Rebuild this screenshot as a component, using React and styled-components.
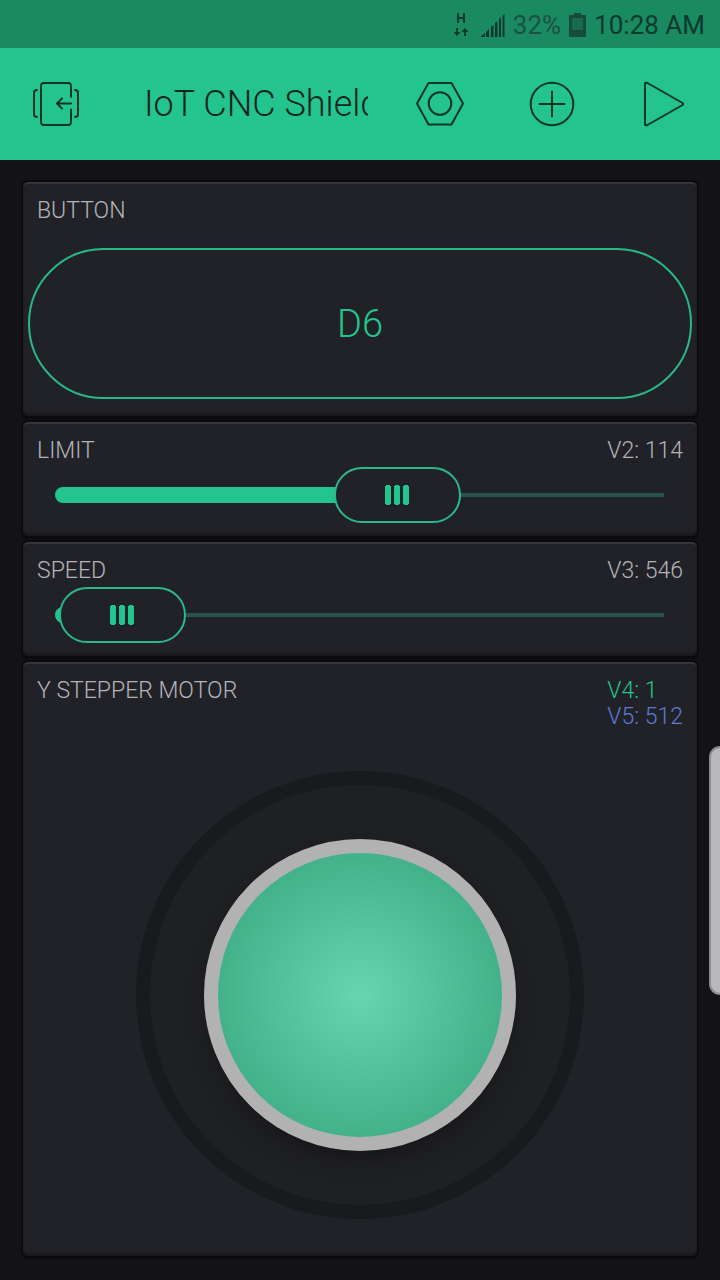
import React, { useState } from "react";
import styled, { createGlobalStyle, css } from "styled-components";

const GlobalStyle = createGlobalStyle`
  *, *::before, *::after { box-sizing: border-box; }
  body {
    margin: 0;
    background: #131217;
    font-family: Roboto, "Liberation Sans", sans-serif;
    font-weight: 300;
  }
  button, input { font: inherit; }
`;

const Screen = styled.div`
  display: flex;
  flex-direction: column;
  min-height: 100vh;
`;

const StatusBar = styled.div`
  display: flex;
  align-items: center;
  justify-content: flex-end;
  gap: 8px;
  height: 48px;
  padding: 2px 15px 0 0;
  background: #1a8a62;
  color: #0d3b2b;
  font-size: 26px;
  font-weight: 400;
  line-height: 48px;
  white-space: nowrap;
`;

const StatusIcon = styled.svg`
  flex: none;
`;

const NetworkIcon = styled(StatusIcon)`
  margin-right: 4px;
`;

const BatteryLevel = styled.span`
  color: #1c5140;
`;

const AppBar = styled.header`
  display: flex;
  align-items: stretch;
  height: 112px;
  background: #24c48e;
  color: #0f3527;
`;

const IconButton = styled.button`
  display: flex;
  flex: none;
  align-items: center;
  justify-content: center;
  width: 112px;
  padding: 0;
  border: 0;
  background: none;
  color: inherit;

  svg {
    fill: none;
    stroke: currentColor;
    stroke-width: 2;
    stroke-linecap: round;
    stroke-linejoin: round;
  }
`;

const Title = styled.h1`
  flex: 1;
  min-width: 0;
  margin: 0 16px 0 32px;
  overflow: hidden;
  color: #14251f;
  font-size: 36px;
  font-weight: 300;
  line-height: 112px;
  white-space: nowrap;
`;

const Board = styled.main`
  display: flex;
  flex: 1;
  flex-direction: column;
  gap: 6px;
  padding: 22px 23px 24px;
`;

const Widget = styled.section`
  display: flex;
  flex: ${(p) => (p.$fill ? "1 0 auto" : "none")};
  flex-direction: column;
  border-top: 2px solid #35353a;
  border-radius: 5px;
  background: #212227;
  box-shadow: 0 0 0 2px #0b0b0e, 0 3px 2px #0b0b0e, inset 0 -3px 2px #1a1a1e;
`;

const WidgetHeader = styled.div`
  display: flex;
  align-items: flex-start;
  justify-content: space-between;
  padding: 14px 14px 0;
  color: #b4b4b8;
  font-size: 23px;
  line-height: 26px;
`;

const WidgetName = styled.label``;

const Readings = styled.div`
  display: flex;
  flex-direction: column;
`;

const tones = { plain: "#b4b4b8", green: "#24c48e", blue: "#5c7bd6" };

const Reading = styled.output`
  color: ${(p) => tones[p.$tone]};
`;

const PinButton = styled.button`
  height: 151px;
  margin: 24px 5px 17px;
  border: 2px solid #27b887;
  border-radius: 76px;
  background: none;
  color: #24c48e;
  font-size: 38px;
  font-weight: 300;
`;

const SliderRow = styled.div`
  display: grid;
  align-items: center;
  margin: 3px 33px 13px 32px;
  height: 56px;

  > * { grid-area: 1 / 1; }
`;

const Rail = styled.span`
  height: 4px;
  background: #27534a;
`;

const RailFill = styled.span`
  height: 16px;
  border-radius: 8px;
  background: #24c48e;
`;

const bar = "linear-gradient(#24c48e, #24c48e)";

const thumb = css`
  box-sizing: border-box;
  width: 127px;
  height: 56px;
  border: 2px solid #2bb88a;
  border-radius: 28px;
  background:
    ${bar} 49px 17px / 6px 18px no-repeat,
    ${bar} 58px 17px / 6px 18px no-repeat,
    ${bar} 67px 17px / 6px 18px no-repeat,
    ${bar} 50px 16px / 4px 20px no-repeat,
    ${bar} 59px 16px / 4px 20px no-repeat,
    ${bar} 68px 16px / 4px 20px no-repeat,
    #212227;
`;

const Range = styled.input`
  appearance: none;
  width: 100%;
  height: 56px;
  margin: 0;
  background: none;

  &::-webkit-slider-thumb {
    appearance: none;
    ${thumb}
  }
  &::-moz-range-thumb {
    ${thumb}
  }
`;

const PadArea = styled.div`
  display: flex;
  flex: 1;
  align-items: center;
  justify-content: center;
  padding: 16px 14px 12px;
`;

const Pad = styled.div`
  display: flex;
  align-items: center;
  justify-content: center;
  width: 448px;
  max-width: 100%;
  aspect-ratio: 1;
  border: 14px solid #191a1d;
  border-radius: 50%;
  background: #1f2023;
`;

const Knob = styled.button`
  width: 312px;
  max-width: 75%;
  aspect-ratio: 1;
  padding: 0;
  border: 14px solid #b2b2b2;
  border-radius: 50%;
  background: #43b28b radial-gradient(circle closest-side, #66d6b0, #43b28b);
  box-shadow: 0 14px 20px -4px #17181b;
`;

const EdgeHandle = styled.div`
  position: fixed;
  top: 746px;
  right: 0;
  width: 11px;
  height: 249px;
  border: 2px solid #8c8c90;
  border-right: 0;
  border-radius: 11px 0 0 11px;
  background: #b9b9bc;
`;

function SliderWidget({ id, name, pin, min, max, initial }) {
  const [value, setValue] = useState(initial);
  const share = ((value - min) / (max - min)) * 100;
  return (
    <Widget>
      <WidgetHeader>
        <WidgetName htmlFor={id}>{name}</WidgetName>
        <Readings>
          <Reading $tone="plain" htmlFor={id}>{pin}: {value}</Reading>
        </Readings>
      </WidgetHeader>
      <SliderRow>
        <Rail />
        <RailFill style={{ width: `max(16px, ${share}%)` }} />
        <Range
          id={id}
          type="range"
          min={min}
          max={max}
          value={value}
          onChange={(e) => setValue(Number(e.target.value))}
        />
      </SliderRow>
    </Widget>
  );
}

export default function App() {
  return (
    <Screen>
      <GlobalStyle />
      <StatusBar>
        <NetworkIcon width="14" height="24" viewBox="0 0 14 24" aria-hidden="true">
          <path d="M4 0v10M10 0v10M4 5h6" fill="none" stroke="currentColor" strokeWidth="2" />
          <path d="M2 15h2v4h2.500L3 23-.5 19H2zM10 23h2v-4h2.500L11 15l-3.500 4H10z" fill="currentColor" />
        </NetworkIcon>
        <StatusIcon width="25" height="24" viewBox="0 0 25 24" aria-hidden="true">
          <path
            d="M0 24l5-4v4zM6 19l3-3v8H6zM11 14l2.500-2v12H11zM15 10l2.500-2v16H15zM19 6l2-2v20h-2zM22.500 3l2-2v23h-2z"
            fill="currentColor"
          />
        </StatusIcon>
        <BatteryLevel>32%</BatteryLevel>
        <StatusIcon width="17" height="24" viewBox="0 0 17 24" aria-hidden="true">
          <path d="M5 0h7v2h5v22H0V2h5z" fill="#174c3a" />
          <path d="M3 5h11v12H3z" fill="#1c6a4d" />
        </StatusIcon>
        <time>10:28 AM</time>
      </StatusBar>

      <AppBar>
        <IconButton aria-label="Exit project">
          <svg width="48" height="46" viewBox="0 0 48 46">
            <path d="M39 16V5q0-3-3-3H12Q9 2 9 5v36q0 3 3 3h24q3 0 3-3V28.500" />
            <path d="M39 22.500H25.500M30 17.500l-5 5 5 5" />
            <path d="M5 9Q2 9 2 12v21q0 3 3 3M43 9q3 0 3 3v21q0 3-3 3" />
          </svg>
        </IconButton>
        <Title>IoT CNC Shield</Title>
        <IconButton aria-label="Project settings">
          <svg width="48" height="44" viewBox="0 0 48 44">
            <path d="M12.500 1h23L47 21.500 35.500 42.500h-23L1 21.500z" />
            <circle cx="24" cy="21.500" r="11.300" />
          </svg>
        </IconButton>
        <IconButton aria-label="Add widget">
          <svg width="46" height="46" viewBox="0 0 46 46">
            <circle cx="23" cy="23" r="21.300" />
            <path d="M23 10.500v25M10.500 23h25" />
          </svg>
        </IconButton>
        <IconButton aria-label="Run project">
          <svg width="40" height="46" viewBox="0 0 40 46">
            <path d="M1 3v40q0 2 2.500 1l35-20q1.500-1 0-2L3.500 2Q1 1 1 3z" />
          </svg>
        </IconButton>
      </AppBar>

      <Board>
        <Widget>
          <WidgetHeader>
            <WidgetName htmlFor="pin-d6">BUTTON</WidgetName>
          </WidgetHeader>
          <PinButton id="pin-d6">D6</PinButton>
        </Widget>
        <SliderWidget id="limit" name="LIMIT" pin="V2" min={0} max={197} initial={114} />
        <SliderWidget id="speed" name="SPEED" pin="V3" min={500} max={6000} initial={546} />
        <Widget $fill>
          <WidgetHeader>
            <WidgetName htmlFor="stepper">Y STEPPER MOTOR</WidgetName>
            <Readings>
              <Reading $tone="green">V4: 1</Reading>
              <Reading $tone="blue">V5: 512</Reading>
            </Readings>
          </WidgetHeader>
          <PadArea>
            <Pad>
              <Knob id="stepper" />
            </Pad>
          </PadArea>
        </Widget>
      </Board>
      <EdgeHandle />
    </Screen>
  );
}
